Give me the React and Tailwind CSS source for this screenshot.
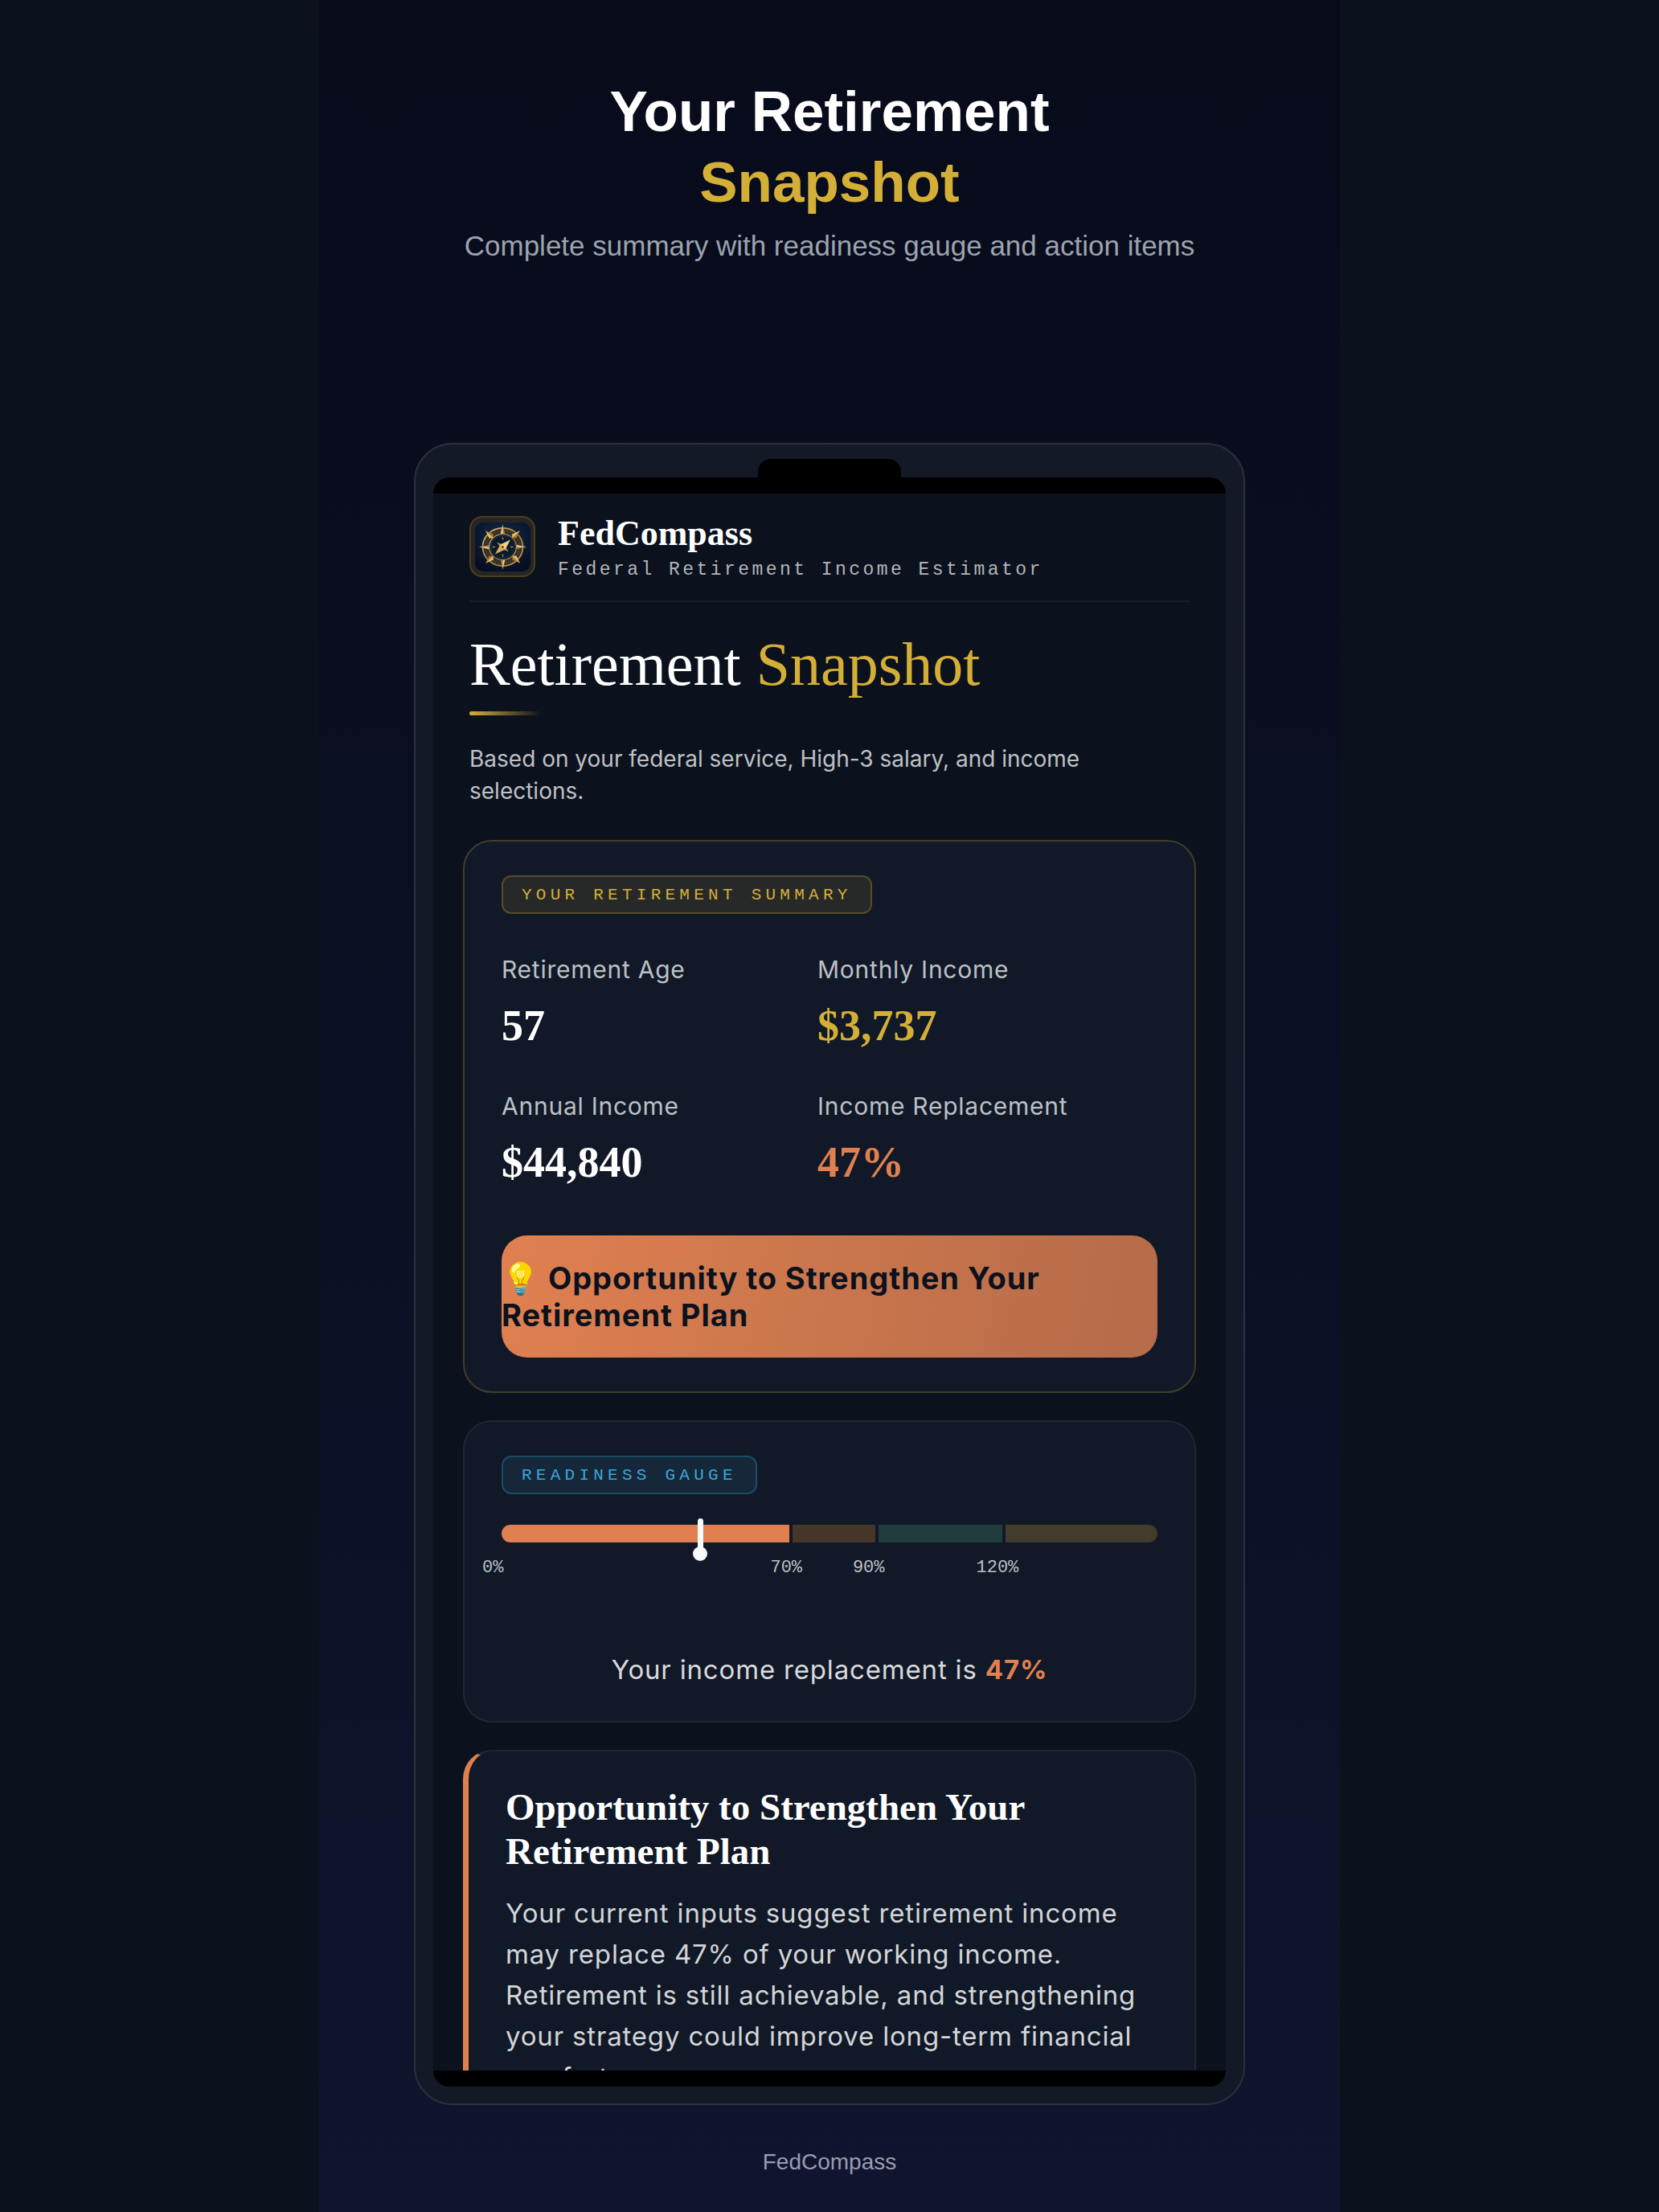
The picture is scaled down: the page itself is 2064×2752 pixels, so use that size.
const serif = "font-['Liberation_Serif',serif]";
const mono = "font-['Liberation_Mono',monospace]";

const stats = [
  { label: "Retirement Age", value: "57", color: "text-white" },
  { label: "Monthly Income", value: "$3,737", color: "text-[#d4af37]" },
  { label: "Annual Income", value: "$44,840", color: "text-white" },
  { label: "Income Replacement", value: "47%", color: "text-[#e08050]" },
];

const zones = [
  { label: "0%", size: 70, color: "bg-[#e08050]", shift: "-ml-6" },
  { label: "70%", size: 20, color: "bg-[#463629]", shift: "-ml-7" },
  { label: "90%", size: 30, color: "bg-[#203c3c]", shift: "-ml-8" },
  { label: "120%", size: 37, color: "bg-[#413c2b]", shift: "-ml-9" },
];

export default function App() {
  return (
    <div className="h-screen bg-[#0b121e] font-['Inter',sans-serif]">
      <div className="mx-auto flex h-full w-full max-w-[1270px] flex-col items-center bg-linear-to-b from-[#070b1a] to-[#10142e]">
        <header className="h-[551px] shrink-0 pt-[95px] text-center font-['Liberation_Sans',sans-serif]">
          <h1 className="text-[71px] leading-[88px] font-bold text-white">
            Your Retirement
            <span className="block text-[#d4af37]">Snapshot</span>
          </h1>
          <p className="mt-[11px] text-[35px] leading-[48px] text-[#9ca3af]">
            Complete summary with readiness gauge and action items
          </p>
        </header>

        <Phone />

        <footer className="shrink-0 pt-[54px] pb-[45px] font-['Liberation_Sans',sans-serif] text-[28px] leading-[34px] text-[#989db0]">
          FedCompass
        </footer>
      </div>
    </div>
  );
}

function Phone() {
  return (
    <div className="flex min-h-0 w-full max-w-[1034px] flex-1 flex-col rounded-[48px] border-2 border-[#2b303d] bg-[#131926] px-[22px] pt-[18px] pb-[21px]">
      <div className="mx-auto h-[23px] w-[178px] shrink-0 rounded-t-2xl bg-black" />
      <main className="min-h-0 flex-1 overflow-hidden rounded-[20px] bg-black py-5">
        <div className="h-full overflow-hidden bg-[#0b121e] px-[37px] pt-7">
          <AppHeader />
          <Title />
          <div className="mt-[41px] flex flex-col gap-[34px]">
            <SummaryCard />
            <GaugeCard />
            <AdviceCard />
          </div>
        </div>
      </main>
    </div>
  );
}

function AppHeader() {
  return (
    <div className="mx-2 flex gap-7 border-b-2 border-[#181e2a] pb-[19px]">
      <div className="flex h-[76px] w-[82px] items-center justify-center rounded-2xl border-2 border-[#4b3f1e] bg-[#262524]">
        <CompassLogo />
      </div>
      <div>
        <p className={`${serif} text-[44px] leading-[44px] font-bold text-white`}>FedCompass</p>
        <p className={`${mono} mt-1 text-[23px] leading-[38px] tracking-[0.15em] text-[#b4b6ba]`}>
          Federal Retirement Income Estimator
        </p>
      </div>
    </div>
  );
}

function CompassLogo() {
  const angles = [0, 90, 180, 270];
  return (
    <svg className="h-[61px] w-[69px]" viewBox="0 0 69 61" aria-hidden="true">
      <defs>
        <radialGradient id="face" cx="50%" cy="30%" r="75%">
          <stop offset="0" stopColor="#122a44" />
          <stop offset="1" stopColor="#050d22" />
        </radialGradient>
        <linearGradient id="gold" x1="0" y1="0" x2="1" y2="1">
          <stop offset="0" stopColor="#e3c077" />
          <stop offset="0.5" stopColor="#a27a38" />
          <stop offset="1" stopColor="#cf9f4e" />
        </linearGradient>
      </defs>
      <rect width="69" height="61" rx="10" fill="url(#face)" />
      <g transform="translate(34.5 30.5) scale(1.06 1)">
        <circle r="20" fill="none" stroke="#302e2b" strokeWidth="7" />
        <circle r="23.6" fill="none" stroke="url(#gold)" strokeWidth="1.6" />
        <circle r="20" fill="none" stroke="#54482f" strokeWidth="3" strokeDasharray="1 2" />
        <circle r="16" fill="#081a2e" stroke="url(#gold)" strokeWidth="1.2" />
        <circle r="14" fill="none" stroke="#453e30" strokeWidth="0.6" />
        {angles.map((a) => (
          <g key={a} transform={`rotate(${a})`}>
            <path d="M0 -28 L2.6 -16 L0 -17 L-2.6 -16 Z" fill="#a97f3d" />
            <path d="M0 -28 L0 -17 L-2.6 -16 Z" fill="#f0d898" />
            <g transform="rotate(45)">
              <path d="M0 -28.5 L3.4 -19 L0 -16 L-3.4 -19 Z" fill="#a97a35" />
              <path d="M0 -28.5 L0 -16 L-3.4 -19 Z" fill="#e6c177" />
            </g>
            <path d="M0 -12 L0 -9" stroke="#a98b52" strokeWidth="1.4" />
          </g>
        ))}
        <path d="M-7 -6 L2 -2 L7 6 L-2 2 Z" fill="#a98a55" />
        <path d="M9 -9 L3 3 L-3 -3 Z" fill="#f2cf82" />
        <path d="M-9 9 L3 3 L-3 -3 Z" fill="#dcab5a" />
        <circle r="1.2" fill="#4a3515" />
      </g>
    </svg>
  );
}

function Title() {
  return (
    <div className="mx-2 pt-[33px]">
      <h2 className={`${serif} text-[76px] leading-[88px] text-white`}>
        Retirement <span className="text-[#d4af37]">Snapshot</span>
      </h2>
      <div className="mt-[15px] h-[5px] w-[90px] rounded-sm bg-linear-to-r from-[#d4af37] to-transparent" />
      <p className="mt-[34px] text-[28px] leading-[40px] text-[#bfc1c4]">
        Based on your federal service, High-3 salary, and income selections.
      </p>
    </div>
  );
}

function Badge({ children, className }) {
  return (
    <span
      className={`${mono} ${className} inline-block rounded-xl border-2 px-[23px] pt-[2px] text-[21px] leading-[42px] tracking-[0.25em] uppercase`}
    >
      {children}
    </span>
  );
}

function SummaryCard() {
  return (
    <section className="rounded-[36px] border-2 border-[#433e27] bg-[#111827] px-[46px] pt-[42px] pb-[42px]">
      <Badge className="border-[#584b29] bg-[#272929] text-[#d4af37]">Your Retirement Summary</Badge>
      <dl className="mt-[47px] grid grid-cols-[393px_1fr] gap-y-[36px]">
        {stats.map((s) => (
          <div key={s.label}>
            <dt className="text-[30px] leading-[44px] tracking-wide text-[#bdc0c5]">{s.label}</dt>
            <dd className={`${serif} ${s.color} mt-[6px] text-[54px] leading-[84px] font-bold`}>{s.value}</dd>
          </div>
        ))}
      </dl>
      <p className="mt-[49px] rounded-[32px] bg-linear-100 from-[#e08050] to-[#b56b49] py-[30px] text-[38px] leading-[46px] font-bold tracking-wide text-[#0b121e]">
        💡 Opportunity to Strengthen Your Retirement Plan
      </p>
    </section>
  );
}

function GaugeCard() {
  return (
    <section className="rounded-[36px] border-2 border-[#202632] bg-[#111827] px-[46px] pt-[42px] pb-[39px]">
      <Badge className="border-[#1e4b66] bg-[#152738] text-[#38a8dc]">Readiness Gauge</Badge>
      <div className="relative mt-[38px]">
        <div className="flex h-[22px] gap-1 overflow-hidden rounded-full">
          {zones.map((z) => (
            <div key={z.label} className={`${z.color} basis-0`} style={{ flexGrow: z.size }} />
          ))}
        </div>
        {/* needle */}
        <div className="absolute -top-2 left-[30.3%] flex -translate-x-1/2 flex-col items-center">
          <div className="h-[36px] w-[7px] rounded-t-full bg-[#f8fafc]" />
          <div className="-mt-px size-[18px] rounded-full bg-[#f8fafc]" />
        </div>
      </div>
      <div className={`${mono} mt-[19px] flex gap-1 text-[22px] leading-[26px] text-[#bdc0c5]`}>
        {zones.map((z) => (
          <div key={z.label} className="min-w-0 basis-0" style={{ flexGrow: z.size }}>
            <span className={z.shift}>{z.label}</span>
          </div>
        ))}
      </div>
      <p className="mt-[88px] text-center text-[33px] leading-[50px] tracking-wide text-[#d8dadd]">
        Your income replacement is <b className="text-[#e08050]">47%</b>
      </p>
    </section>
  );
}

function AdviceCard() {
  return (
    <section className="rounded-[36px] border-2 border-l-[7px] border-[#202632] border-l-[#e08050] bg-[#111827] px-[46px] pt-[42px] pb-[42px]">
      <h3 className={`${serif} text-[47px] leading-[55px] font-bold text-white`}>
        Opportunity to Strengthen Your Retirement Plan
      </h3>
      <p className="mt-[24px] text-[33px] leading-[51px] tracking-wide text-[#d3d5d8]">
        Your current inputs suggest retirement income may replace 47% of your working income. Retirement
        is still achievable, and strengthening your strategy could improve long-term financial comfort.
      </p>
    </section>
  );
}
